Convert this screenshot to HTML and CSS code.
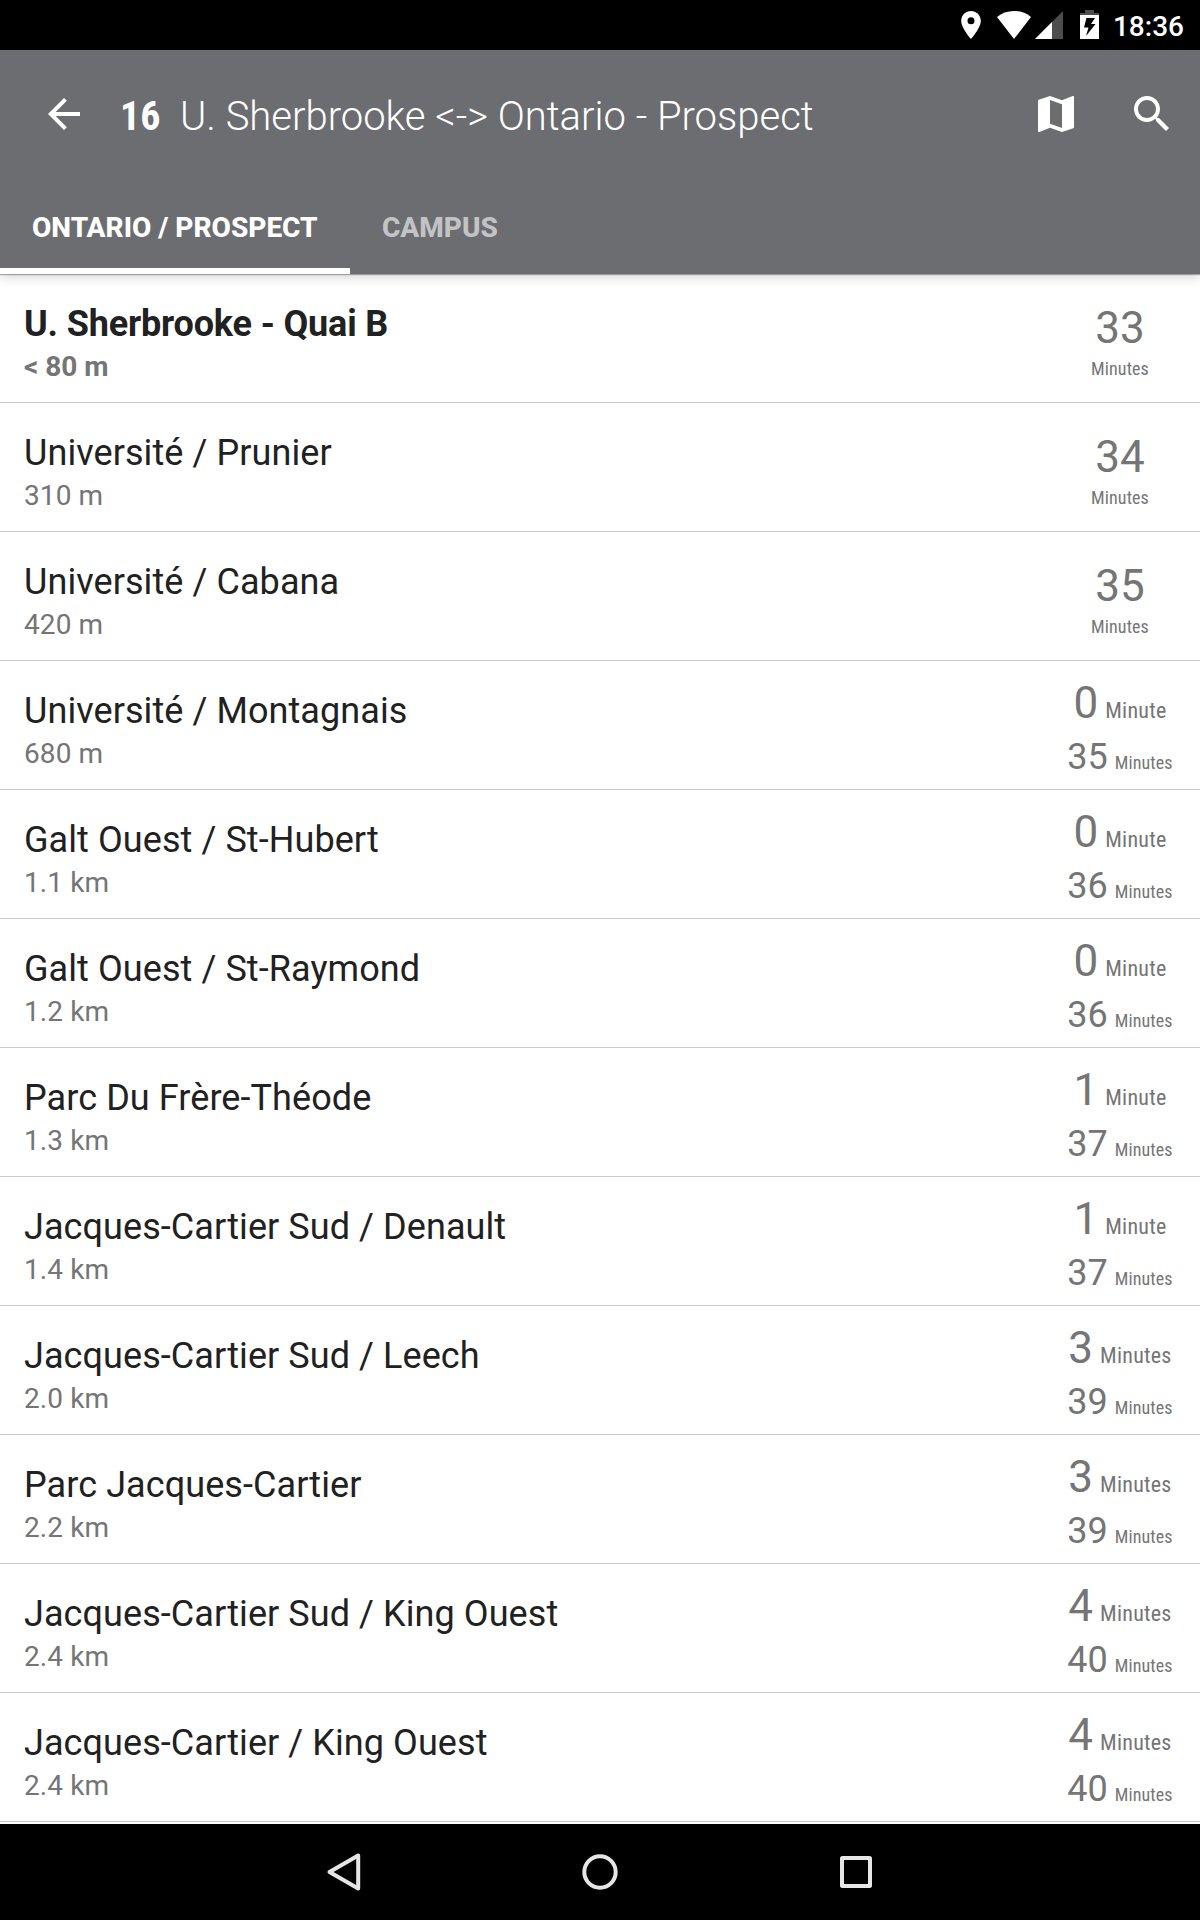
FILE: index.html
```html
<!DOCTYPE html>
<html lang="fr">
<head>
<meta charset="utf-8">
<title>16 U. Sherbrooke - Ontario - Prospect</title>
<link rel="stylesheet" href="styles.css">
</head>
<body>
<div class="status">
  <svg class="pin" viewBox="5 2 14 20"><path d="M12 2C8.130 2 5 5.130 5 9c0 5.250 7 13 7 13s7-7.750 7-13c0-3.870-3.130-7-7-7zm0 9.500a2.500 2.500 0 0 1 0-5 2.500 2.500 0 0 1 0 5z"/></svg>
  <svg class="wifi" viewBox="0 0 34 28"><path d="M0 6Q7 0 17 0T34 6L17 28Z"/></svg>
  <svg class="signal" viewBox="0 0 28 28"><path class="dim" d="M28 0V28H0Z"/><path d="M17 11V28H0Z"/></svg>
  <svg class="battery" viewBox="0 0 19 29"><path class="dim" d="M5 0H14V3H19V5H0V3H5Z"/><path fill-rule="evenodd" d="M0 5H19V29H0ZM6.500 8L4 17.500H8.500L6 26L15.500 14H11L15 8Z"/></svg>
  <span class="clock">18:36</span>
</div>
<header class="appbar">
  <div class="toolbar">
    <svg class="icon" viewBox="0 0 24 24"><path d="M20 11H7.830l5.590-5.590L12 4l-8 8 8 8 1.410-1.410L7.830 13H20v-2z"/></svg>
    <div class="heading"><b class="route">16</b><span class="name">U. Sherbrooke &lt;-&gt; Ontario - Prospect</span></div>
    <svg class="icon" viewBox="0 0 24 24"><path d="M20.500 3l-.16.030L15 5.100 9 3 3.360 4.900c-.21.070-.36.250-.36.480V20.500c0 .28.220.5.500.5l.16-.03L9 18.900l6 2.100 5.640-1.900c.21-.07.360-.25.360-.48V3.500c0-.28-.22-.5-.5-.5zM15 19l-6-2.110V5l6 2.110V19z"/></svg>
    <svg class="icon" viewBox="0 0 24 24"><path d="M15.500 14h-.79l-.28-.27C15.410 12.590 16 11.110 16 9.500 16 5.910 13.090 3 9.500 3S3 5.910 3 9.500 5.910 16 9.500 16c1.610 0 3.090-.59 4.230-1.570l.27.280v.79l5 4.990L20.490 19l-4.990-5zm-6 0C7.010 14 5 11.990 5 9.500S7.010 5 9.500 5 14 7.010 14 9.500 11.990 14 9.500 14z"/></svg>
  </div>
  <nav class="tabs"><span class="tab active">ONTARIO / PROSPECT</span><span class="tab">CAMPUS</span></nav>
</header>
<main class="stops">
  <div class="stop near"><div class="info"><div class="title">U. Sherbrooke - Quai B</div><div class="dist">&lt; 80 m</div></div><div class="times one"><span class="big">33</span><span class="unit">Minutes</span></div></div>
  <div class="stop"><div class="info"><div class="title">Université / Prunier</div><div class="dist">310 m</div></div><div class="times one"><span class="big">34</span><span class="unit">Minutes</span></div></div>
  <div class="stop"><div class="info"><div class="title">Université / Cabana</div><div class="dist">420 m</div></div><div class="times one"><span class="big">35</span><span class="unit">Minutes</span></div></div>
  <div class="stop"><div class="info"><div class="title">Université / Montagnais</div><div class="dist">680 m</div></div><div class="times"><div class="first"><span class="big">0</span><span class="unit">Minute</span></div><div class="next"><span class="mid">35</span><span class="unit">Minutes</span></div></div></div>
  <div class="stop"><div class="info"><div class="title">Galt Ouest / St-Hubert</div><div class="dist">1.1 km</div></div><div class="times"><div class="first"><span class="big">0</span><span class="unit">Minute</span></div><div class="next"><span class="mid">36</span><span class="unit">Minutes</span></div></div></div>
  <div class="stop"><div class="info"><div class="title">Galt Ouest / St-Raymond</div><div class="dist">1.2 km</div></div><div class="times"><div class="first"><span class="big">0</span><span class="unit">Minute</span></div><div class="next"><span class="mid">36</span><span class="unit">Minutes</span></div></div></div>
  <div class="stop"><div class="info"><div class="title">Parc Du Frère-Théode</div><div class="dist">1.3 km</div></div><div class="times"><div class="first"><span class="big">1</span><span class="unit">Minute</span></div><div class="next"><span class="mid">37</span><span class="unit">Minutes</span></div></div></div>
  <div class="stop"><div class="info"><div class="title">Jacques-Cartier Sud / Denault</div><div class="dist">1.4 km</div></div><div class="times"><div class="first"><span class="big">1</span><span class="unit">Minute</span></div><div class="next"><span class="mid">37</span><span class="unit">Minutes</span></div></div></div>
  <div class="stop"><div class="info"><div class="title">Jacques-Cartier Sud / Leech</div><div class="dist">2.0 km</div></div><div class="times"><div class="first"><span class="big">3</span><span class="unit">Minutes</span></div><div class="next"><span class="mid">39</span><span class="unit">Minutes</span></div></div></div>
  <div class="stop"><div class="info"><div class="title">Parc Jacques-Cartier</div><div class="dist">2.2 km</div></div><div class="times"><div class="first"><span class="big">3</span><span class="unit">Minutes</span></div><div class="next"><span class="mid">39</span><span class="unit">Minutes</span></div></div></div>
  <div class="stop"><div class="info"><div class="title">Jacques-Cartier Sud / King Ouest</div><div class="dist">2.4 km</div></div><div class="times"><div class="first"><span class="big">4</span><span class="unit">Minutes</span></div><div class="next"><span class="mid">40</span><span class="unit">Minutes</span></div></div></div>
  <div class="stop"><div class="info"><div class="title">Jacques-Cartier / King Ouest</div><div class="dist">2.4 km</div></div><div class="times"><div class="first"><span class="big">4</span><span class="unit">Minutes</span></div><div class="next"><span class="mid">40</span><span class="unit">Minutes</span></div></div></div>
</main>
<footer class="navbar">
  <svg class="key" viewBox="0 0 48 48"><path d="M38.200 7.500V40.500L9.500 24Z"/></svg>
  <svg class="key" viewBox="0 0 48 48"><circle cx="24" cy="24" r="15.700"/></svg>
  <svg class="key" viewBox="0 0 48 48"><rect x="10" y="10" width="28" height="28" rx="0.500"/></svg>
</footer>
</body>
</html>
```

FILE: styles.css
```css
* { box-sizing: border-box; }
body {
  margin: 0;
  width: 1200px;
  height: 1920px;
  display: flex;
  flex-direction: column;
  background: #fff;
  font-family: Roboto, "Liberation Sans", sans-serif;
  overflow: hidden;
}
.status {
  height: 50px;
  background: #000;
  color: #fff;
  display: flex;
  justify-content: flex-end;
  align-items: flex-start;
  padding: 11px 16px 0 0;
}
.status svg { fill: #fff; flex: none; height: 28px; }
.status .dim { fill: #4d4d4d; }
.status .pin { width: 20px; margin-right: 16px; }
.status .wifi { width: 34px; margin-right: 4px; }
.status .signal { width: 28px; margin-right: 17px; }
.status .battery { width: 19px; height: 29px; margin: -1px 14px 0 0; }
.clock { font-size: 28px; line-height: 32px; font-weight: 460; }
.appbar {
  height: 224px;
  background: #6c6d70;
  color: #fff;
  display: flex;
  flex-direction: column;
  justify-content: space-between;
  box-shadow: 0 1px 1px rgba(0, 0, 0, .3), 0 2px 12px rgba(0, 0, 0, .2);
  position: relative;
}
.toolbar { display: flex; align-items: center; height: 128px; padding: 0 24px 0 40px; gap: 48px; }
.icon { width: 48px; height: 48px; fill: #fff; flex: none; }
.heading { flex: 1; margin-left: -16px; font-size: 40px; line-height: 48px; display: flex; gap: 19px; padding-top: 6px; white-space: nowrap; }
.route { width: 41px; font-family: "Roboto Condensed", Roboto, sans-serif; font-stretch: 75%; font-weight: 700; }
.name { font-weight: 300; }
.tabs { display: flex; height: 96px; }
.tab {
  height: 96px;
  padding: 30px 32px 0;
  font-size: 28px;
  line-height: 40px;
  font-weight: 800;
  color: #c2c3c4;
}
.tab.active { width: 350px; color: #fff; border-bottom: 6px solid #fff; white-space: nowrap; }
.stops { height: 1550px; }
.stop { height: 129px; border-bottom: 1px solid #ccc; display: flex; }
.info { flex: 1; padding: 29px 0 0 24px; }
.title { font-size: 36px; line-height: 42px; color: #212121; letter-spacing: .08px; }
.dist { font-size: 28px; line-height: 33px; margin-top: 5px; color: #757575; letter-spacing: .1px; }
.near .title, .near .dist { font-weight: 700; }
.near .title { letter-spacing: -.16px; }
.near .dist { letter-spacing: 0; }
.times { width: 160px; color: #757575; padding-top: 16px; display: flex; flex-direction: column; align-items: center; }
.times.one { padding-top: 28px; }
.big { font-size: 44px; line-height: 52px; }
.mid { font-size: 36px; line-height: 42px; }
.unit { font-family: "Roboto Condensed", Roboto, sans-serif; font-stretch: 75%; font-size: 18px; line-height: 21px; letter-spacing: .1px; }
.one .unit { margin-top: 4px; }
.first, .next { display: flex; align-items: baseline; gap: 7px; }
.first .unit { font-size: 22px; letter-spacing: .25px; }
.next { margin-top: 7px; }
.navbar { height: 96px; background: #000; display: flex; justify-content: center; align-items: center; gap: 208px; }
.key { width: 48px; height: 48px; fill: none; stroke: #e6e6e6; stroke-width: 4; stroke-linejoin: round; }
```
